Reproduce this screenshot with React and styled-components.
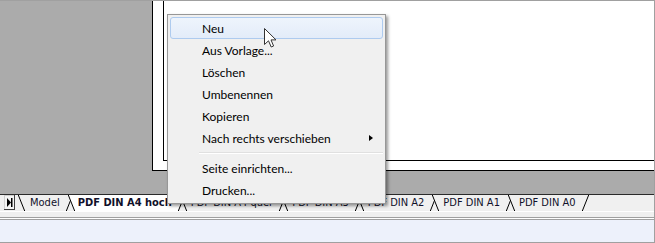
import React from "react";
import styled, { createGlobalStyle } from "styled-components";

const Global = createGlobalStyle`
  html, body { margin: 0; padding: 0; background: #ffffff; }
  #root { width: 655px; height: 243px; }
`;

const Window = styled.div`
  position: relative;
  width: 655px;
  height: 243px;
  box-sizing: border-box;
  border-top: 1px solid #a0a0a0;
  border-right: 1px solid #a0a0a0;
  border-bottom: 1px solid #a0a0a0;
  display: flex;
  flex-direction: column;
  overflow: hidden;
`;

const Canvas = styled.div`
  height: 193px;
  flex: none;
  background: #ababab;
  display: flex;
  align-items: flex-start;
  padding-left: 152px;
`;

const Paper = styled.div`
  flex: 1;
  height: 170px;
  box-sizing: border-box;
  background: #ffffff;
  border-left: 1px solid #000;
  border-bottom: 1px solid #000;
  padding: 0 0 9px 10px;
  display: flex;
`;

const PaperInner = styled.div`
  flex: 1;
  border-left: 1px solid #000;
  border-bottom: 1px solid #000;
`;

const TabStrip = styled.div`
  height: 17px;
  box-sizing: border-box;
  flex: none;
  border-top: 1px solid #2a2a2a;
  background: #f0f0f0;
  display: flex;
  align-items: stretch;
  padding-left: 4px;
`;

const NavButton = styled.div`
  width: 11px;
  height: 15px;
  margin-right: 3px;
  display: flex;
`;

const TabBox = styled.div`
  position: relative;
  z-index: ${(p) => p.$z};
  display: flex;
  height: 16px;
  margin-left: ${(p) => (p.$first ? "0" : "-5px")};
`;

const Edge = styled.svg`
  flex: none;
  display: block;
`;

const TabLabel = styled.div`
  background: ${(p) => (p.$active ? "#ffffff" : "#f0f0f0")};
  font-family: "DejaVu Sans Condensed", "DejaVu Sans", sans-serif;
  font-stretch: condensed;
  font-size: 11px;
  font-weight: ${(p) => (p.$active ? "bold" : "normal")};
  color: #10102a;
  line-height: 16px;
  padding: 0 6px 0 ${(p) => p.$pl}px;
  white-space: nowrap;
`;

const Lower = styled.div`
  height: 9px;
  flex: none;
  box-sizing: border-box;
  background: #f0f0f0;
  border-top: 1px solid #ffffff;
  display: flex;
  flex-direction: column;
  justify-content: flex-end;
`;

const LowerRule = styled.div`
  height: 1px;
  background: ${(p) => p.$c};
`;

const Status = styled.div`
  flex: 1;
  background: #edf1fb;
`;

const Menu = styled.div`
  position: absolute;
  left: 167px;
  top: 13px;
  width: 219px;
  box-sizing: border-box;
  background: #f0f0f0;
  border: 1px solid #979797;
  padding: 2px;
  box-shadow: 2px 2px 3px rgba(0, 0, 0, 0.4);
  font-family: Lato, "Noto Sans", sans-serif;
  font-size: 12px;
  color: #000;
  z-index: 500;
`;

const Item = styled.div`
  position: relative;
  height: 22px;
  box-sizing: border-box;
  display: flex;
  align-items: center;
  padding-left: 31px;
  border: 1px solid ${(p) => (p.$hot ? "#aecbef" : "transparent")};
  border-radius: 3px;
  background: ${(p) =>
    p.$hot ? "linear-gradient(#eef4fc, #e3ecf9)" : "transparent"};
`;

const SubArrow = styled.span`
  position: absolute;
  right: 9px;
  top: 7px;
  width: 0;
  height: 0;
  border-left: 4px solid #000;
  border-top: 3.5px solid transparent;
  border-bottom: 3.5px solid transparent;
`;

const Separator = styled.div`
  margin: 3px 0 3px 29px;
  height: 1px;
  background: #e0e0e0;
  border-bottom: 1px solid #ffffff;
`;

const Cursor = styled.svg`
  position: absolute;
  left: 264px;
  top: 27px;
  z-index: 600;
`;

const menuItems = [
  { t: "Neu", hot: true },
  { t: "Aus Vorlage..." },
  { t: "Löschen" },
  { t: "Umbenennen" },
  { t: "Kopieren" },
  { t: "Nach rechts verschieben", sub: true },
  { sep: true },
  { t: "Seite einrichten..." },
  { t: "Drucken..." },
];

const tabs = [
  { t: "Model", pl: 5 },
  { t: "PDF DIN A4 hoch", active: true, pl: 3 },
  { t: "PDF DIN A4 quer", pl: 4 },
  { t: "PDF DIN A3", pl: 4 },
  { t: "PDF DIN A2", pl: 4 },
  { t: "PDF DIN A1", pl: 4 },
  { t: "PDF DIN A0", pl: 4 },
];

function Tab({ label, active, z, first, pl }) {
  const fill = active ? "#ffffff" : "#f0f0f0";
  return (
    <TabBox $z={z} $first={first}>
      <Edge width="7" height="16" viewBox="0 0 7 16">
        <polygon points="0,0 7,0 7,16 6.5,16" fill={fill} />
        <line x1="0.3" y1="0" x2="6.7" y2="16" stroke="#000" strokeWidth="1" />
      </Edge>
      <TabLabel $active={active} $pl={pl}>
        {label}
      </TabLabel>
      <Edge width="7" height="16" viewBox="0 0 7 16">
        <polygon points="0,0 7,0 0.5,16 0,16" fill={fill} />
        <line x1="6.7" y1="0" x2="0.3" y2="16" stroke="#000" strokeWidth="1" />
      </Edge>
    </TabBox>
  );
}

export default function App() {
  return (
    <>
      <Global />
      <Window>
        <Canvas>
          <Paper>
            <PaperInner />
          </Paper>
        </Canvas>
        <TabStrip>
          <NavButton>
            <svg width="11" height="15" viewBox="0 0 11 15">
              <rect x="0.5" y="0.5" width="10" height="14" fill="#f4f4f4" stroke="#d0d0d0" />
              <line x1="10.5" y1="0" x2="10.5" y2="15" stroke="#404040" />
              <line x1="0" y1="14.5" x2="11" y2="14.5" stroke="#404040" />
              <polygon points="3,3 7,7.5 3,12" fill="#000" />
              <rect x="7" y="3" width="1.5" height="9" fill="#000" />
            </svg>
          </NavButton>
          {tabs.map((tb, i) => (
            <Tab
              key={tb.t}
              label={tb.t}
              active={tb.active}
              first={i === 0}
              pl={tb.pl}
              z={tb.active ? 100 : i + 1}
            />
          ))}
        </TabStrip>
        <Lower>
          <LowerRule $c="#a0a0a0" />
          <LowerRule $c="#ffffff" />
          <LowerRule $c="#a0a0a0" />
        </Lower>
        <Status />
        <Menu>
          {menuItems.map((m, i) =>
            m.sep ? (
              <Separator key={i} />
            ) : (
              <Item key={i} $hot={m.hot}>
                {m.t}
                {m.sub && <SubArrow />}
              </Item>
            )
          )}
        </Menu>
        <Cursor width="13" height="21" viewBox="0 0 13 21">
          <path
            d="M0.5,0.5 L0.5,16.5 L4.5,12.8 L7.2,19 L9.6,18 L7,11.9 L12,11.9 Z"
            fill="#ffffff"
            stroke="#333"
            strokeWidth="1"
            strokeLinejoin="miter"
          />
        </Cursor>
      </Window>
    </>
  );
}
